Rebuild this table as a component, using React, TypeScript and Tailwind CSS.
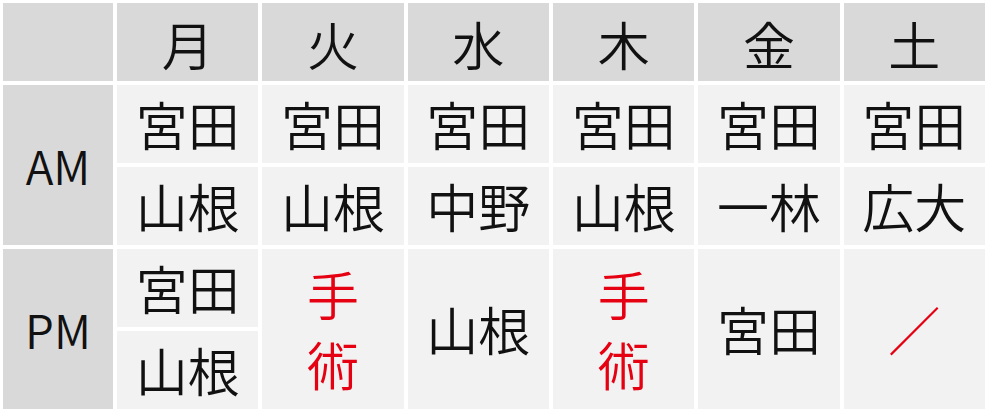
import React from 'react';

const days = ['月', '火', '水', '木', '金', '土'];
const amRow1 = ['宮田', '宮田', '宮田', '宮田', '宮田', '宮田'];
const amRow2 = ['山根', '山根', '中野', '山根', '一林', '広大'];

const font = { fontFamily: '"Noto Sans CJK JP", "Noto Sans", sans-serif' };

function Cell({ children, head, className = '' }: { children?: React.ReactNode; head?: boolean; className?: string }) {
  return (
    <div
      className={`flex items-center justify-center leading-none font-[350] text-[#111] ${
        head ? 'bg-[#d9d9d9]' : 'bg-[#f2f2f2]'
      } ${className || 'text-[52px]'}`}
    >
      {children}
    </div>
  );
}

function Red({ lines }: { lines: string[] }) {
  return (
    <div className="flex flex-col items-center text-[#e50012] leading-[70px]">
      {lines.map((l) => (
        <span key={l}>{l}</span>
      ))}
    </div>
  );
}

export default function App() {
  return (
    <div className="w-[995px] h-[415px] bg-white" style={font}>
      <div className="w-[988px] p-[3px] grid grid-cols-[110px_repeat(6,1fr)] grid-rows-[repeat(5,78px)] gap-[4px]">
        {/* header */}
        <Cell head />
        {days.map((d) => (
          <Cell key={d} head className="text-[52px] pt-[3px]">
            {d}
          </Cell>
        ))}

        {/* AM */}
        <Cell head className="row-span-2 text-[46px]">AM</Cell>
        {amRow1.map((n, i) => (
          <Cell key={'a1' + i}>{n}</Cell>
        ))}
        {amRow2.map((n, i) => (
          <Cell key={'a2' + i}>{n}</Cell>
        ))}

        {/* PM */}
        <Cell head className="row-span-2 text-[46px]">PM</Cell>
        <Cell>宮田</Cell>
        <Cell className="row-span-2 text-[52px]">
          <Red lines={['手', '術']} />
        </Cell>
        <Cell className="row-span-2 text-[52px]">山根</Cell>
        <Cell className="row-span-2 text-[52px]">
          <Red lines={['手', '術']} />
        </Cell>
        <Cell className="row-span-2 text-[52px]">宮田</Cell>
        <Cell className="row-span-2 text-[52px]">
          <span className="text-[#e50012]">／</span>
        </Cell>
        <Cell>山根</Cell>
      </div>
    </div>
  );
}
